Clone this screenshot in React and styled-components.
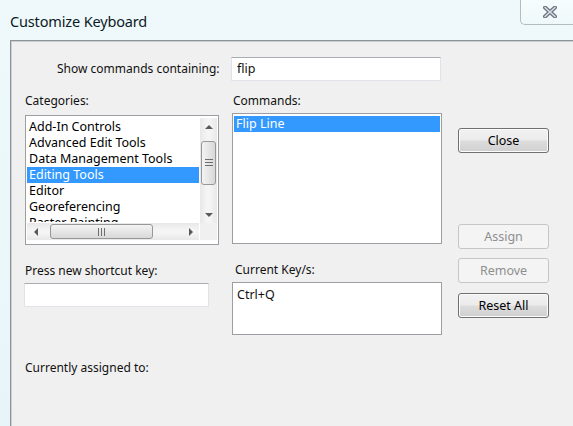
import React from "react";
import styled, { createGlobalStyle, css } from "styled-components";

const Global = createGlobalStyle`
  html, body { margin: 0; padding: 0; background: #ffffff; }
  body { font-family: "Noto Sans", "Open Sans", sans-serif; font-size: 12px; color: #111; }
`;

const Window = styled.div`
  width: 573px;
  height: 426px;
  display: flex;
  flex-direction: column;
  background: linear-gradient(#eff9fb, #e8f5f8);
  overflow: hidden;
`;

const TitleBar = styled.div`
  height: 40px;
  display: flex;
  align-items: flex-start;
  justify-content: space-between;
  flex-shrink: 0;
`;

const Title = styled.div`
  margin: 11px 0 0 10px;
  font-size: 14.5px;
  color: #0c1a24;
  letter-spacing: -0.15px;
`;

const CloseBox = styled.div`
  width: 62px;
  height: 26px;
  margin-top: -1px;
  margin-right: -9px;
  border: 1px solid #b4bcc0;
  border-top: none;
  border-right: none;
  border-bottom-left-radius: 5px;
  background: linear-gradient(#f7fdfe, #eef8fa);
  display: flex;
  align-items: center;
  padding-left: 22px;
  box-sizing: border-box;
`;

const Frame = styled.div`
  flex: 1;
  display: flex;
  padding-left: 10px;
`;

const Client = styled.div`
  flex: 1;
  background: #f0f0f0;
  border-left: 1px solid #8c9497;
  border-top: 1px solid #8c9497;
  box-shadow: inset 1px 1px 0 #c9d0d2;
  display: flex;
  flex-direction: column;
`;

const FilterRow = styled.div`
  display: flex;
  align-items: center;
  margin: 16px 0 0 46px;
  gap: 6px;
`;

const Label = styled.div`
  height: 16px;
  line-height: 16px;
  white-space: nowrap;
  margin-top: ${(p) => p.$top || 0}px;
  margin-left: ${(p) => p.$left || 0}px;
  ${(p) => p.$w && css`width: ${p.$w}px;`}
`;

const TextBox = styled.div`
  box-sizing: border-box;
  width: ${(p) => p.$w}px;
  height: ${(p) => p.$h}px;
  margin-top: ${(p) => p.$top || 0}px;
  margin-left: ${(p) => p.$left || 0}px;
  background: #fff;
  border: 1px solid #e2e3ea;
  border-top-color: #abadb3;
  ${(p) =>
    p.$framed &&
    css`
      border: 1px solid #9c9ea4;
    `}
  padding: ${(p) => (p.$framed ? "3px 4px" : "2px 5px")};
  line-height: 17px;
  font-size: 12.5px;
`;

const Body = styled.div`
  display: flex;
  padding-left: 14px;
`;

const Column = styled.div`
  display: flex;
  flex-direction: column;
  width: ${(p) => p.$w}px;
  margin-left: ${(p) => p.$gap || 0}px;
  margin-top: ${(p) => p.$top || 0}px;
`;

const ListBox = styled.div`
  box-sizing: border-box;
  width: ${(p) => p.$w}px;
  height: ${(p) => p.$h}px;
  margin-top: ${(p) => p.$top}px;
  background: #fff;
  border: 1px solid #9c9ea4;
  padding: 2px 1px;
  display: grid;
  grid-template-columns: ${(p) => (p.$scroll ? "1fr 17px" : "1fr")};
  grid-template-rows: ${(p) => (p.$scroll ? "105px 17px" : "auto")};
  align-content: start;
  column-gap: 1px;
`;

const Items = styled.div`
  overflow: hidden;
  display: flex;
  flex-direction: column;
  padding-top: ${(p) => p.$pad || 0}px;
  ${(p) => p.$clip && css`height: ${p.$clip}px; align-self: start;`}
`;

const Item = styled.div`
  height: 16px;
  line-height: 16px;
  padding-left: 2px;
  white-space: nowrap;
  font-size: 12.5px;
  color: ${(p) => (p.$selected ? "#fff" : "#000")};
  background: ${(p) => (p.$selected ? "#3399ff" : "transparent")};
  flex-shrink: 0;
`;

const VScroll = styled.div`
  display: flex;
  flex-direction: column;
  align-items: stretch;
  background: linear-gradient(90deg, #e8e8e8, #f4f4f4 40%, #f4f4f4 60%, #e8e8e8);
`;

const HScroll = styled.div`
  display: flex;
  align-items: stretch;
  background: linear-gradient(#e8e8e8, #f4f4f4 40%, #f4f4f4 60%, #e8e8e8);
`;

const Corner = styled.div`
  background: #f0f0f0;
`;

const Arrow = styled.div`
  flex: 0 0 17px;
  display: flex;
  align-items: center;
  justify-content: center;
`;

const Track = styled.div`
  flex: 1;
  display: flex;
  flex-direction: ${(p) => (p.$vertical ? "column" : "row")};
  padding: ${(p) => (p.$vertical ? "6px 0 0" : "0 0 0 6px")};
`;

const Thumb = styled.div`
  box-sizing: border-box;
  ${(p) =>
    p.$vertical
      ? css`
          height: 44px;
          margin: 0 1px;
          background: linear-gradient(90deg, #f3f3f3, #e6e6e6 50%, #d8d8d8);
        `
      : css`
          width: 103px;
          margin: 1px 0;
          background: linear-gradient(#f3f3f3, #e6e6e6 50%, #d8d8d8);
        `}
  border: 1px solid #979797;
  border-radius: 3px;
  display: flex;
  align-items: center;
  justify-content: center;
`;

const ButtonStack = styled.div`
  display: flex;
  flex-direction: column;
  width: 91px;
  margin-left: 17px;
  margin-top: 47px;
`;

const Button = styled.div`
  box-sizing: border-box;
  height: 25px;
  margin-top: ${(p) => p.$top || 0}px;
  border-radius: 3px;
  display: flex;
  align-items: center;
  justify-content: center;
  font-size: 12.5px;
  ${(p) =>
    p.$disabled
      ? css`
          border: 1px solid #c4c7c9;
          background: #f4f4f4;
          color: #8e8f8f;
        `
      : css`
          border: 1px solid #707070;
          background: linear-gradient(#f2f2f2 0%, #ebebeb 48%, #dddddd 52%, #cfcfcf 100%);
          box-shadow: inset 0 0 0 1px #fcfcfc;
          color: #000;
        `}
`;

const Tri = ({ dir }) => {
  const pts = {
    up: "0,4 4,0 8,4",
    down: "0,0 8,0 4,4",
    left: "4,0 4,8 0,4",
    right: "0,0 0,8 4,4",
  }[dir];
  const v = dir === "up" || dir === "down";
  return (
    <svg width={v ? 8 : 4} height={v ? 4 : 8} viewBox={v ? "0 0 8 4" : "0 0 4 8"}>
      <polygon points={pts} fill="#5a5a5a" />
    </svg>
  );
};

const Grip = ({ vertical }) => (
  <svg width="8" height="8" viewBox="0 0 8 8">
    {[1, 4, 7].map((o) =>
      vertical ? (
        <line key={o} x1="0" y1={o - 0.5} x2="8" y2={o - 0.5} stroke="#6d6d6d" strokeWidth="1" />
      ) : (
        <line key={o} x1={o - 0.5} y1="0" x2={o - 0.5} y2="8" stroke="#6d6d6d" strokeWidth="1" />
      )
    )}
  </svg>
);

const CloseGlyph = () => (
  <svg width="14" height="12" viewBox="0 0 14 12">
    <path d="M2 1.5 L12 10.5 M12 1.5 L2 10.5" stroke="#6f7480" strokeWidth="4" strokeLinecap="round" />
    <path d="M2 1.5 L12 10.5 M12 1.5 L2 10.5" stroke="#d9dde3" strokeWidth="1.6" strokeLinecap="round" />
  </svg>
);

const categories = [
  "Add-In Controls",
  "Advanced Edit Tools",
  "Data Management Tools",
  "Editing Tools",
  "Editor",
  "Georeferencing",
  "Raster Painting",
];

export default function App() {
  return (
    <>
      <Global />
      <Window>
        <TitleBar>
          <Title>Customize Keyboard</Title>
          <CloseBox>
            <CloseGlyph />
          </CloseBox>
        </TitleBar>
        <Frame>
          <Client>
            <FilterRow>
              <Label $w={168}>Show commands containing:</Label>
              <TextBox $w={210} $h={24}>flip</TextBox>
            </FilterRow>
            <Body>
              <Column $w={194} $top={12}>
                <Label>Categories:</Label>
                <ListBox $w={194} $h={130} $top={6} $scroll>
                  <Items $pad={1} $clip={103}>
                    {categories.map((c) => (
                      <Item key={c} $selected={c === "Editing Tools"}>
                        {c}
                      </Item>
                    ))}
                  </Items>
                  <VScroll>
                    <Arrow>
                      <Tri dir="up" />
                    </Arrow>
                    <Track $vertical>
                      <Thumb $vertical>
                        <Grip vertical />
                      </Thumb>
                    </Track>
                    <Arrow>
                      <Tri dir="down" />
                    </Arrow>
                  </VScroll>
                  <HScroll>
                    <Arrow>
                      <Tri dir="left" />
                    </Arrow>
                    <Track>
                      <Thumb>
                        <Grip />
                      </Thumb>
                    </Track>
                    <Arrow>
                      <Tri dir="right" />
                    </Arrow>
                  </HScroll>
                  <Corner />
                </ListBox>
                <Label $top={18}>Press new shortcut key:</Label>
                <TextBox $w={185} $h={24} $top={4} $left={-1} />
                <Label $top={53}>Currently assigned to:</Label>
              </Column>
              <Column $w={209} $gap={13} $top={12}>
                <Label $left={1}>Commands:</Label>
                <ListBox $w={210} $h={131} $top={4}>
                  <Items>
                    <Item $selected>Flip Line</Item>
                  </Items>
                </ListBox>
                <Label $top={18} $left={3}>Current Key/s:</Label>
                <TextBox $w={210} $h={53} $top={4} $framed>
                  Ctrl+Q
                </TextBox>
              </Column>
              <ButtonStack>
                <Button>Close</Button>
                <Button $top={71} $disabled>
                  Assign
                </Button>
                <Button $top={9} $disabled>
                  Remove
                </Button>
                <Button $top={10}>Reset All</Button>
              </ButtonStack>
            </Body>
          </Client>
        </Frame>
      </Window>
    </>
  );
}
